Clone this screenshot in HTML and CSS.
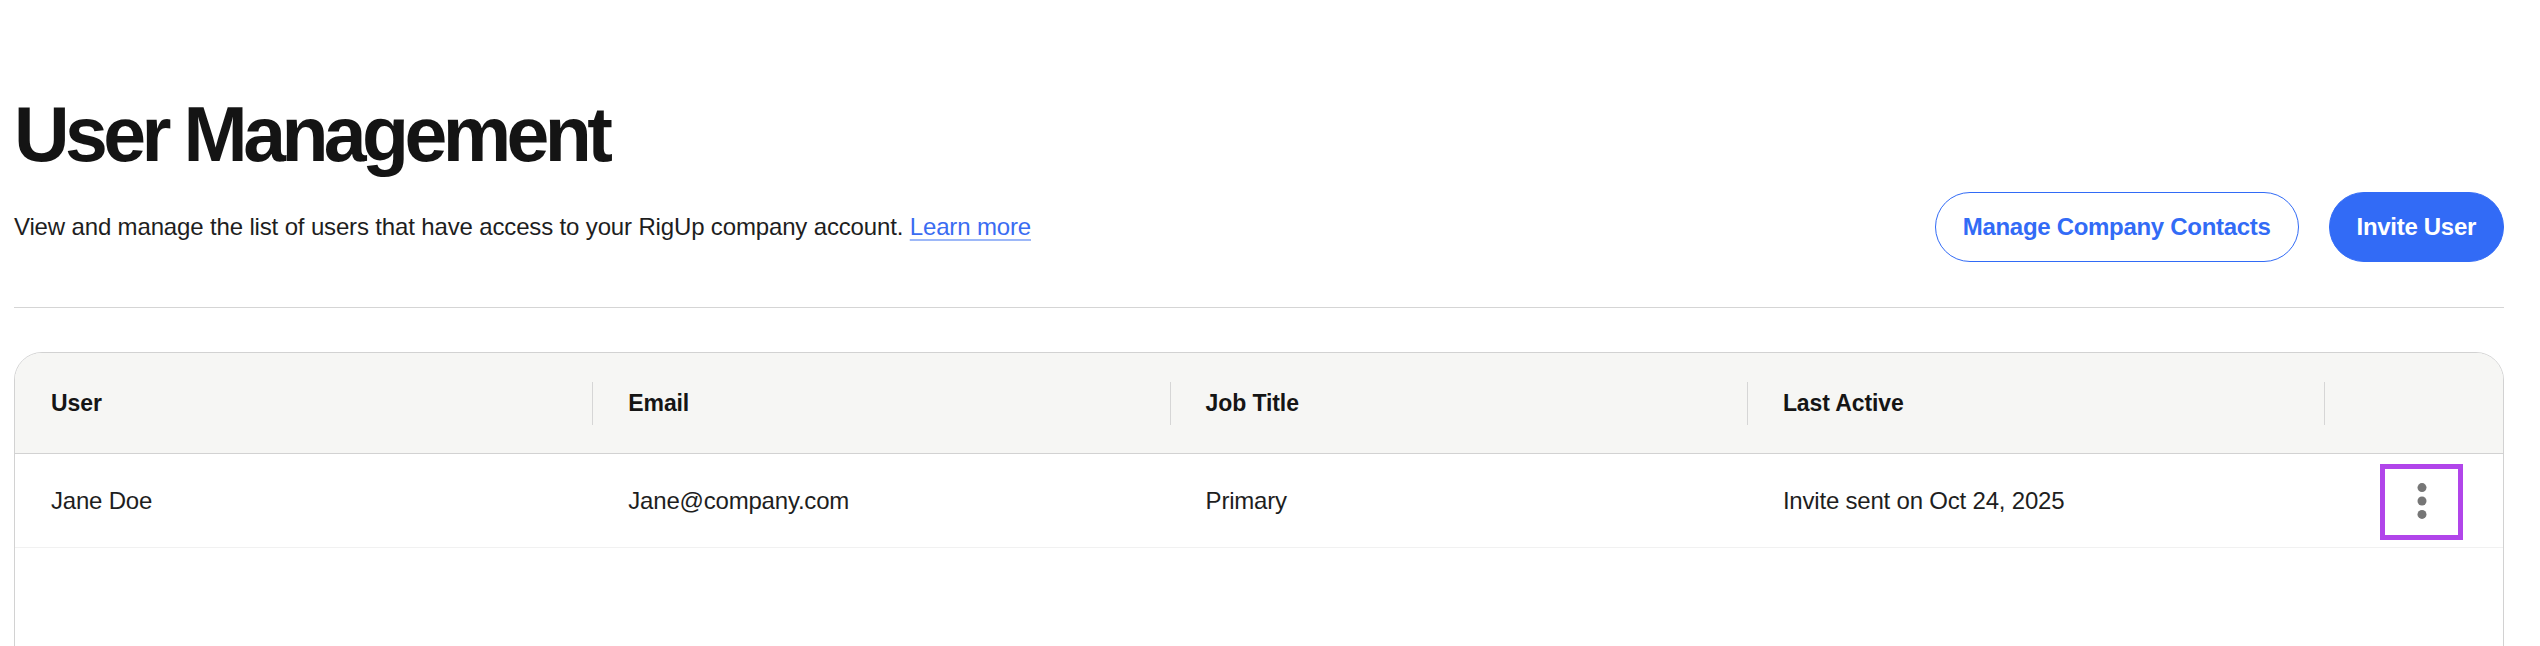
FILE: index.html
```html
<!DOCTYPE html>
<html lang="en">
<head>
<meta charset="utf-8">
<title>User Management</title>
<link rel="stylesheet" href="styles.css">
</head>
<body>
<main class="page">
  <h1 class="title">User Management</h1>

  <div class="toolbar">
    <p class="intro">View and manage the list of users that have access to your RigUp company account. <a href="#" class="link">Learn more</a></p>
    <div class="actions">
      <button type="button" class="btn btn-outline">Manage Company Contacts</button>
      <button type="button" class="btn btn-primary">Invite User</button>
    </div>
  </div>

  <hr class="divider">

  <section class="table">
    <div class="thead">
      <div class="th">User</div>
      <div class="th">Email</div>
      <div class="th">Job Title</div>
      <div class="th">Last Active</div>
      <div class="th"></div>
    </div>
    <div class="row">
      <div class="td">Jane Doe</div>
      <div class="td">Jane@company.com</div>
      <div class="td">Primary</div>
      <div class="td">Invite sent on Oct 24, 2025</div>
      <div class="td td-action">
        <button type="button" class="kebab" aria-label="More actions">
          <svg width="10" height="36" viewBox="0 0 10 36" aria-hidden="true">
            <circle cx="5" cy="4.6" r="4.5"/>
            <circle cx="5" cy="18" r="4.5"/>
            <circle cx="5" cy="31.4" r="4.5"/>
          </svg>
        </button>
      </div>
    </div>
  </section>
</main>
</body>
</html>
```
FILE: styles.css
```css
html,
body {
  margin: 0;
  height: 100%;
  overflow: hidden;
  background: #ffffff;
}

body {
  font-family: "Liberation Sans", Arial, sans-serif;
  color: #1e1e1e;
}

.page {
  box-sizing: border-box;
  height: 100vh;
  padding: 94px 36px 0 14px;
  display: flex;
  flex-direction: column;
}

/* Heading */
.title {
  margin: 0;
  font-size: 77px;
  line-height: 80px;
  font-weight: 700;
  letter-spacing: -4.6px;
  color: #141414;
}

/* Intro line + buttons */
.toolbar {
  margin-top: 18px;
  display: flex;
  align-items: center;
  justify-content: space-between;
}

.intro {
  margin: 0;
  font-size: 24px;
  line-height: 32px;
  letter-spacing: -0.15px;
  color: #1e1e1e;
}

.link {
  color: #3a6cf2;
  text-decoration: underline;
  text-decoration-color: #9db8f8;
  text-decoration-thickness: 2px;
  text-underline-offset: 4px;
}

.actions {
  display: flex;
  gap: 30px;
}

.btn {
  box-sizing: border-box;
  height: 70px;
  padding: 0 27px;
  border-radius: 35px;
  border: 1px solid #326bf6;
  font-family: "Liberation Sans", Arial, sans-serif;
  font-size: 24px;
  font-weight: 700;
  letter-spacing: -0.3px;
  cursor: pointer;
}

.btn-outline {
  background: #ffffff;
  color: #326bf6;
}

.btn-primary {
  background: #326bf6;
  color: #ffffff;
}

.divider {
  margin: 45px 0 0;
  height: 0;
  border: 0;
  border-top: 1px solid #d5d5d5;
}

/* Users table */
.table {
  flex: none;
  height: 340px;
  margin-top: 44px;
  border: 1px solid #d2d2d2;
  border-radius: 28px 28px 0 0;
}

.thead,
.row {
  display: grid;
  grid-template-columns: repeat(4, 577.3px) 1fr;
  align-items: center;
}

.thead {
  height: 100px;
  background: #f6f6f4;
  border-bottom: 1px solid #d2d2d2;
  border-radius: 27px 27px 0 0;
}

.th {
  height: 43px;
  display: flex;
  align-items: center;
  padding-left: 35px;
  border-left: 1px solid #d6d6d6;
  font-size: 23px;
  font-weight: 700;
  letter-spacing: -0.1px;
  color: #151515;
}

.th:first-child {
  border-left-color: transparent;
}

.row {
  height: 93px;
  border-bottom: 1px solid #f1f1f1;
}

.td {
  padding-left: 36px;
  font-size: 24px;
  letter-spacing: -0.2px;
  color: #1e1e1e;
  white-space: nowrap;
}

.td-action {
  display: flex;
  justify-content: flex-end;
  padding: 0 40px 0 0;
}

.kebab {
  box-sizing: border-box;
  width: 83px;
  height: 76px;
  margin-top: 3px;
  padding: 0;
  display: flex;
  align-items: center;
  justify-content: center;
  background: transparent;
  border: 5px solid #b145ea;
  cursor: pointer;
}

.kebab svg {
  fill: #767676;
  margin-top: -3px;
}
```
